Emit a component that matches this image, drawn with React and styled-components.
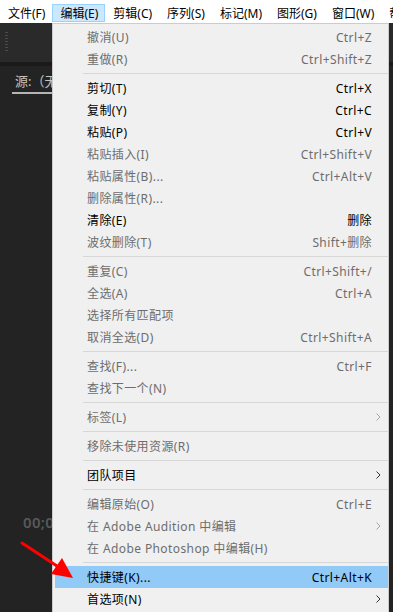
import React from 'react';
import styled, { createGlobalStyle, css } from 'styled-components';

const GlobalStyle = createGlobalStyle`
  html, body {
    margin: 0;
    padding: 0;
  }
  body {
    width: 393px;
    height: 612px;
    overflow: hidden;
    background: #232323;
    font-family: "Noto Sans", "Noto Sans CJK SC", sans-serif;
  }
`;

const Window = styled.div`
  position: relative;
  width: 393px;
  height: 612px;
  display: flex;
  flex-direction: column;
  overflow: hidden;
  background: #232323;
`;

const MenuBar = styled.div`
  height: 23px;
  flex-shrink: 0;
  display: flex;
  align-items: flex-start;
  background: #fff;
  overflow: hidden;
`;

const BarItem = styled.div`
  height: 18px;
  margin-top: 4px;
  padding: 0 6px 0 7px;
  display: flex;
  align-items: center;
  font-size: 12px;
  color: #000;
  white-space: nowrap;
  border: 1px solid transparent;
  box-sizing: border-box;
  flex-shrink: 0;

  ${props => props.active && css`
    background: #cce8ff;
    border-color: #99d1ff;
  `}
`;

const Workspace = styled.div`
  flex: 1;
  display: flex;
  flex-direction: column;
`;

const PanelHeader = styled.div`
  height: 39px;
  background: #2a2a2a;
  display: flex;
  align-items: center;
  padding-left: 5px;
`;

const Grip = styled.div`
  width: 3px;
  height: 21px;
  background: repeating-linear-gradient(to bottom, #4a4a4a 0 1px, transparent 1px 3px);
`;

const Divider = styled.div`
  height: 4px;
  background: #1a1a1a;
`;

const SourcePanel = styled.div`
  flex: 1;
  display: flex;
  flex-direction: column;
  background: #232323;
`;

const TabRow = styled.div`
  display: flex;
  padding: 7px 0 0 12px;
`;

const Tab = styled.div`
  padding: 0 3px 3px 3px;
  font-size: 13px;
  line-height: 16px;
  color: #c4c4c4;
  white-space: nowrap;
  border-bottom: 2px solid #b5b5b5;
`;

const Monitor = styled.div`
  flex: 1;
  display: flex;
  flex-direction: column;
  justify-content: flex-end;
  padding: 0 0 80px 23px;
`;

const Timecode = styled.div`
  font-size: 15px;
  font-weight: 600;
  color: #585858;
  letter-spacing: 0.3px;
  white-space: nowrap;
`;

const Dropdown = styled.div`
  position: absolute;
  top: 23px;
  left: 52px;
  width: 337px;
  height: 600px;
  box-sizing: border-box;
  border: 1px solid #cccccc;
  background: #f0f0f0;
  padding: 2px 0 2px 2px;
  z-index: 2;
  font-size: 12px;
  letter-spacing: 0.4px;
`;

const Item = styled.div`
  height: 22px;
  display: flex;
  align-items: center;
  justify-content: space-between;
  padding: 0 16px 0 32px;
  color: ${props => props.disabled ? '#6d6d6d' : '#000'};
  background: ${props => props.selected ? '#91c9f7' : 'transparent'};
  white-space: nowrap;
  position: relative;
`;

const Shortcut = styled.span`
  color: ${props => props.disabled ? '#6d6d6d' : '#000'};
`;

const Chevron = styled.svg`
  position: absolute;
  right: 7px;
  top: 7px;
`;

const Separator = styled.div`
  height: 1px;
  margin: 3px 0 3px 28px;
  background: #d7d7d7;
`;

const Arrow = styled.svg`
  position: absolute;
  left: 0;
  top: 0;
  z-index: 3;
  pointer-events: none;
`;

const barItems = ['文件(F)', '编辑(E)', '剪辑(C)', '序列(S)', '标记(M)', '图形(G)', '窗口(W)', '帮助(H)'];

const menu = [
  { label: '撤消(U)', key: 'Ctrl+Z', disabled: true },
  { label: '重做(R)', key: 'Ctrl+Shift+Z', disabled: true },
  '-',
  { label: '剪切(T)', key: 'Ctrl+X' },
  { label: '复制(Y)', key: 'Ctrl+C' },
  { label: '粘贴(P)', key: 'Ctrl+V' },
  { label: '粘贴插入(I)', key: 'Ctrl+Shift+V', disabled: true },
  { label: '粘贴属性(B)...', key: 'Ctrl+Alt+V', disabled: true },
  { label: '删除属性(R)...', disabled: true },
  { label: '清除(E)', key: '删除' },
  { label: '波纹删除(T)', key: 'Shift+删除', disabled: true },
  '-',
  { label: '重复(C)', key: 'Ctrl+Shift+/', disabled: true },
  { label: '全选(A)', key: 'Ctrl+A', disabled: true },
  { label: '选择所有匹配项', disabled: true },
  { label: '取消全选(D)', key: 'Ctrl+Shift+A', disabled: true },
  '-',
  { label: '查找(F)...', key: 'Ctrl+F', disabled: true },
  { label: '查找下一个(N)', disabled: true },
  '-',
  { label: '标签(L)', sub: true, disabled: true },
  '-',
  { label: '移除未使用资源(R)', disabled: true },
  '-',
  { label: '团队项目', sub: true },
  '-',
  { label: '编辑原始(O)', key: 'Ctrl+E', disabled: true },
  { label: '在 Adobe Audition 中编辑', sub: true, disabled: true },
  { label: '在 Adobe Photoshop 中编辑(H)', disabled: true },
  '-',
  { label: '快捷键(K)...', key: 'Ctrl+Alt+K', selected: true },
  { label: '首选项(N)', sub: true },
];

const App = () => (
  <Window>
    <GlobalStyle />
    <MenuBar>
      {barItems.map((name, i) => (
        <BarItem key={name} active={i === 1}>{name}</BarItem>
      ))}
    </MenuBar>
    <Workspace>
      <PanelHeader>
        <Grip />
      </PanelHeader>
      <Divider />
      <SourcePanel>
        <TabRow>
          <Tab>源:（无剪辑）</Tab>
        </TabRow>
        <Monitor>
          <Timecode>00;00;00;00</Timecode>
        </Monitor>
      </SourcePanel>
    </Workspace>

    <Dropdown>
      {menu.map((m, i) => (
        m === '-' ? <Separator key={i} /> : (
          <Item key={i} disabled={m.disabled} selected={m.selected}>
            <span>{m.label}</span>
            {m.key && <Shortcut disabled={m.disabled}>{m.key}</Shortcut>}
            {m.sub && (
              <Chevron width="5" height="8" viewBox="0 0 5 8">
                <polyline
                  points="0.5,0.5 4,4 0.5,7.5"
                  fill="none"
                  stroke={m.disabled ? '#a6a6a6' : '#333'}
                  strokeWidth="1"
                />
              </Chevron>
            )}
          </Item>
        )
      ))}
    </Dropdown>

    <Arrow width="393" height="612" viewBox="0 0 393 612">
      <line x1="22" y1="543" x2="60" y2="568" stroke="#ff0000" strokeWidth="3" strokeLinecap="round" />
      <polygon points="73,578 51,574 62,558" fill="#ff0000" />
    </Arrow>
  </Window>
);

export default App;
